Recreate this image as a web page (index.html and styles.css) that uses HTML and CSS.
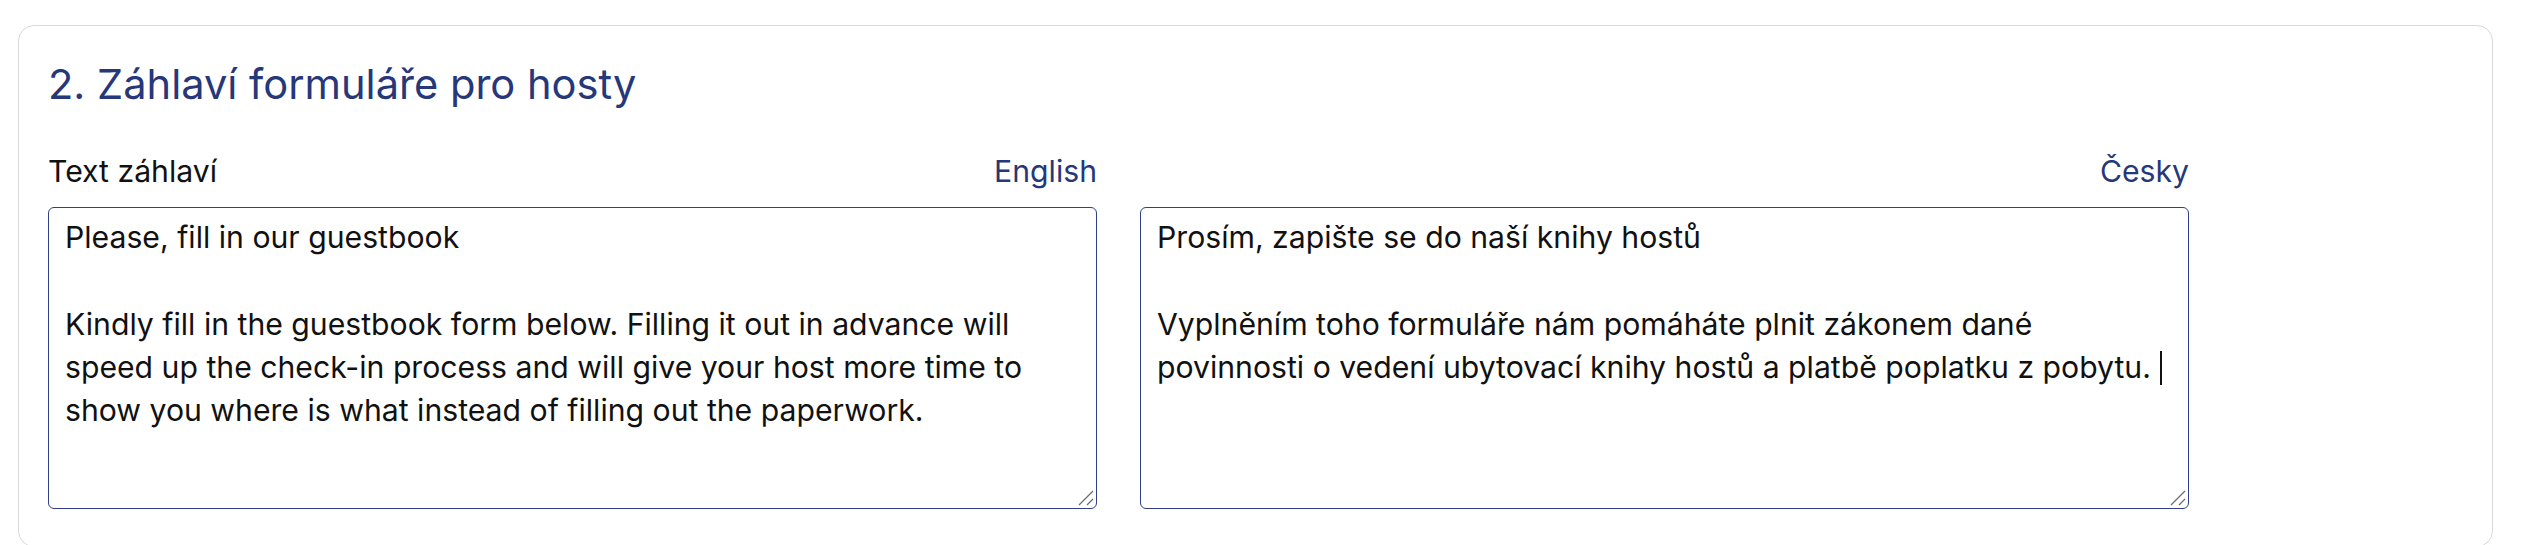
FILE: index.html
```html
<!DOCTYPE html>
<html lang="cs">
<head>
<meta charset="utf-8">
<title>Záhlaví formuláře pro hosty</title>
<link rel="stylesheet" href="styles.css">
</head>
<body>
<section class="card">
  <h2 class="card-title">2. Záhlaví formuláře pro hosty</h2>
  <div class="fields">
    <div class="field">
      <div class="field-head">
        <span class="field-label">Text záhlaví</span>
        <span class="field-lang">English</span>
      </div>
      <div class="textbox">
        <div class="textbox-text">Please, fill in our guestbook

Kindly fill in the guestbook form below. Filling it out in advance will
speed up the check-in process and will give your host more time to
show you where is what instead of filling out the paperwork.</div>
        <svg class="grip" width="16" height="16" viewBox="0 0 16 16"><path d="M1 15 L15 1 M9 15 L15 9" stroke="#6e6e6e" stroke-width="1.3" fill="none"/></svg>
      </div>
    </div>
    <div class="field">
      <div class="field-head">
        <span class="field-label"></span>
        <span class="field-lang">Česky</span>
      </div>
      <div class="textbox">
        <div class="textbox-text">Prosím, zapište se do naší knihy hostů

Vyplněním toho formuláře nám pomáháte plnit zákonem dané
povinnosti o vedení ubytovací knihy hostů a platbě poplatku z pobytu. <span class="caret"></span></div>
        <svg class="grip" width="16" height="16" viewBox="0 0 16 16"><path d="M1 15 L15 1 M9 15 L15 9" stroke="#6e6e6e" stroke-width="1.3" fill="none"/></svg>
      </div>
    </div>
  </div>
</section>
</body>
</html>
```
FILE: styles.css
```css
html, body {
  margin: 0;
  padding: 0;
  background: #ffffff;
}

body {
  font-family: "Inter", "DejaVu Sans", sans-serif;
  color: #111111;
}

.card {
  box-sizing: border-box;
  width: 2475px;
  height: 522px;
  margin: 25px 0 0 18px;
  padding: 34px 29px 33px 29px;
  border: 1px solid #d9d9d9;
  border-radius: 16px;
  background: #ffffff;
}

.card-title {
  margin: 0 0 42px 0;
  font-size: 41.6px;
  font-weight: 400;
  line-height: 48px;
  color: #26377a;
  letter-spacing: 0;
}

.fields {
  display: flex;
  gap: 43px;
}

.field {
  width: 1049px;
  display: flex;
  flex-direction: column;
}

.field-head {
  display: flex;
  justify-content: space-between;
  align-items: baseline;
  height: 43.2px;
  margin-bottom: 14px;
  font-size: 30.2px;
  line-height: 43.2px;
}

.field-label {
  color: #111111;
}

.field-lang {
  color: #26377a;
}

.textbox {
  position: relative;
  box-sizing: border-box;
  height: 302px;
  padding: 8px 16px;
  border: 1px solid #2f4088;
  border-radius: 6px;
  background: #ffffff;
}

.textbox-text {
  font-size: 30.2px;
  line-height: 43.2px;
  white-space: pre;
  color: #111111;
}

.caret {
  display: inline-block;
  width: 2px;
  height: 34px;
  margin-left: 1px;
  background: #111111;
  vertical-align: -7px;
}

.grip {
  position: absolute;
  right: 2px;
  bottom: 2px;
}
```
